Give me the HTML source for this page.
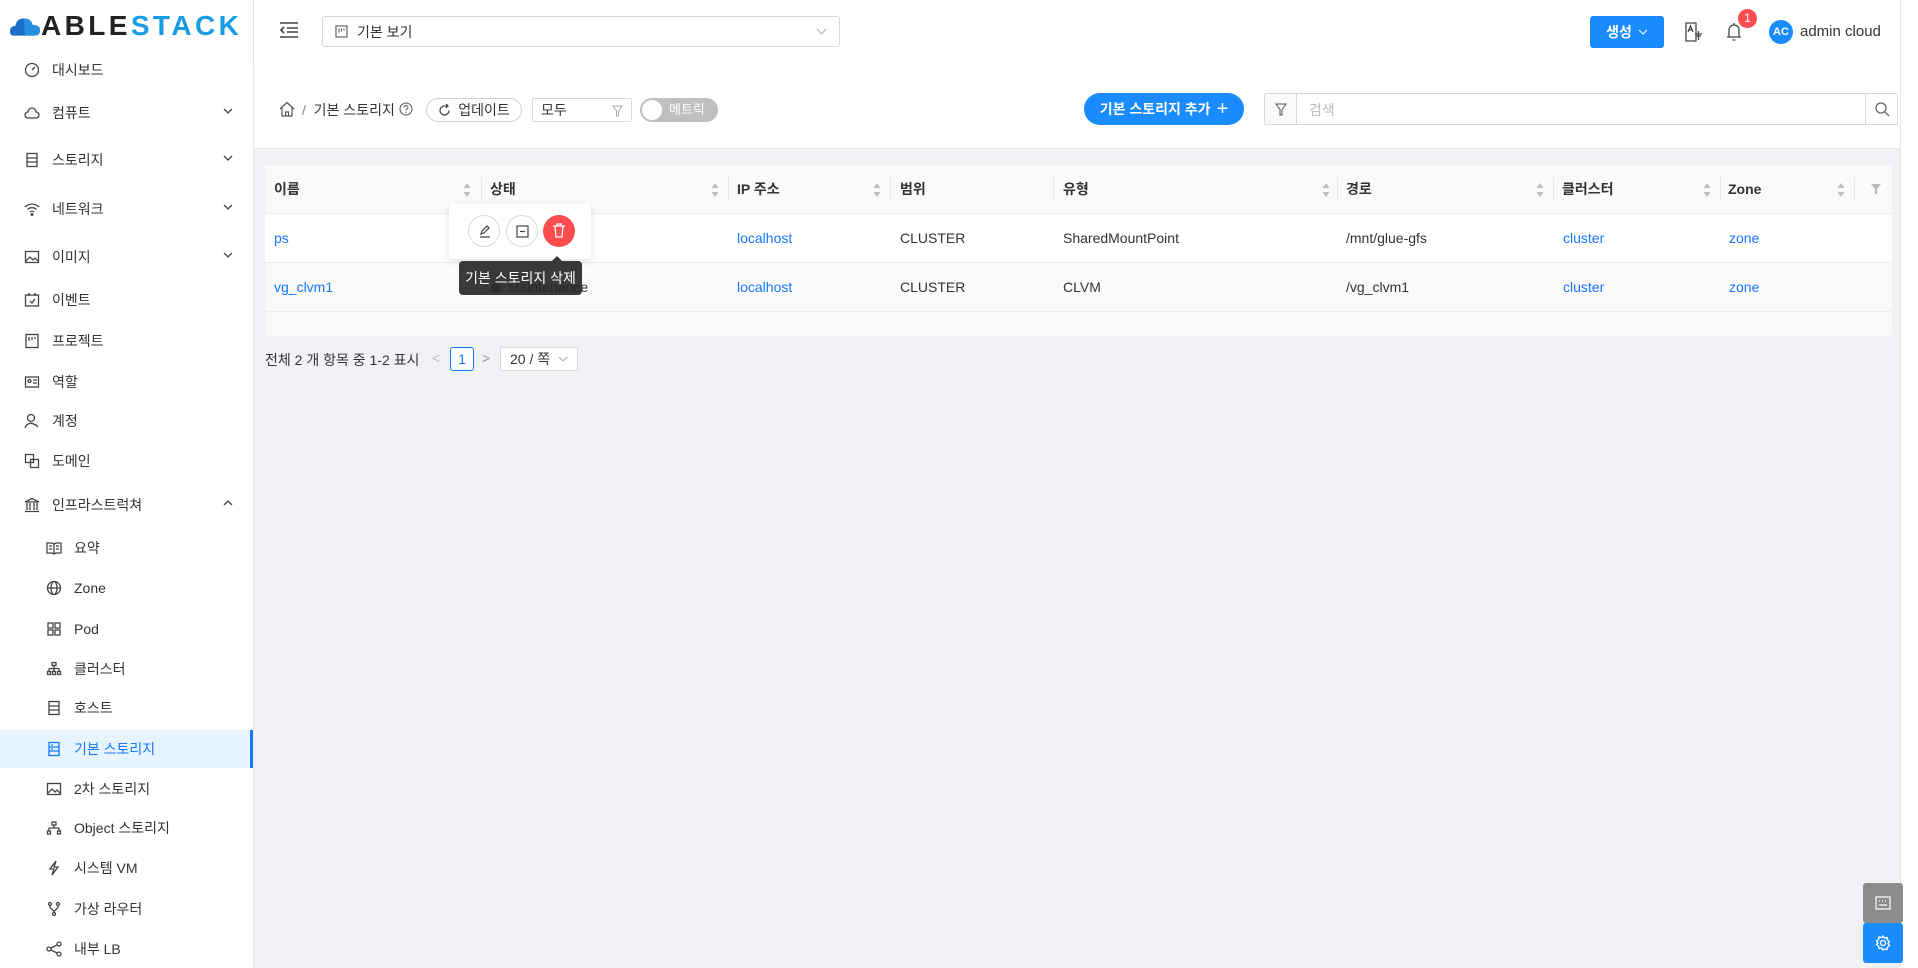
<!DOCTYPE html>
<html><head><meta charset="utf-8">
<style>
*{box-sizing:border-box;margin:0;padding:0}
body{width:1918px;height:968px;overflow:hidden;font-family:"Liberation Sans","Noto Sans CJK KR",sans-serif;font-size:14px;color:#333;background:#f0f2f5;position:relative}
.abs{position:absolute}
.side{left:0;top:0;width:254px;height:968px;background:#fff;border-right:1px solid #e8e8e8}
.item{position:absolute;left:0;width:253px;height:38px;display:flex;align-items:center;padding-left:24px;font-size:14px;color:#333}
.item.sub{padding-left:46px}
.item svg{width:16px;height:16px;margin-right:12px;fill:none;stroke:#444;stroke-width:1.3}
.item .arr{position:absolute;right:20px;top:12px;width:10px;height:10px;margin:0}
.item.act{background:#e6f4ff;color:#1677ff;border-right:3px solid #1677ff}
.item.act svg{stroke:#1677ff}
.hdr{left:254px;top:0;width:1646px;height:64px;background:#fff;box-shadow:0 1px 4px rgba(0,0,0,.06)}
.tb{left:254px;top:64px;width:1646px;height:85px;background:#fff;border-bottom:1px solid #e5e5e5}
.blue{color:#1677ff}
.th{position:absolute;top:0;height:49px;line-height:49px;font-weight:bold;color:#333;font-size:14px}
.sort{position:absolute;top:18px;width:8px;height:14px}
.cell{position:absolute;font-size:14px}
</style></head><body>

<!-- sidebar -->
<div class="abs side">
  <div class="abs" style="left:10px;top:10px;display:flex;align-items:center">
    <svg width="30" height="24" viewBox="0 0 28 22"><path d="M3 20 Q0 20 0 16 Q0 11 5 11 Q6 4 13 4 Q20 4 21 10 Q28 10 28 15 Q28 20 23 20Z" fill="#1a6fc4"/><path d="M13 4 Q20 4 21 10 Q28 10 28 15 Q28 20 23 20 L14 20Z" fill="#2b8fe0"/></svg>
    <span style="font-size:28px;font-weight:bold;letter-spacing:3.4px;color:#222;margin-left:1px;font-family:'Liberation Sans',sans-serif">ABLE<span style="color:#1a9be6">STACK</span></span>
  </div>
  <div class="item" style="top:51px"><svg viewBox="0 0 16 16"><circle cx="8" cy="8" r="6.5"/><path d="M8 8l3-3"/></svg>대시보드</div>
  <div class="item" style="top:94px"><svg viewBox="0 0 16 16"><path d="M4 13h8a3 3 0 000-6 4 4 0 00-8 0 3 3 0 000 6z"/></svg>컴퓨트<svg class="arr" viewBox="0 0 10 10"><path d="M1 3l4 4 4-4"/></svg></div>
  <div class="item" style="top:141px"><svg viewBox="0 0 16 16"><rect x="3" y="1.5" width="10" height="13"/><path d="M3 6h10M3 10h10"/></svg>스토리지<svg class="arr" viewBox="0 0 10 10"><path d="M1 3l4 4 4-4"/></svg></div>
  <div class="item" style="top:190px"><svg viewBox="0 0 16 16"><path d="M1 6a10 10 0 0114 0M3.5 8.5a6.5 6.5 0 019 0M6 11a3 3 0 014 0"/><circle cx="8" cy="13.5" r=".8"/></svg>네트워크<svg class="arr" viewBox="0 0 10 10"><path d="M1 3l4 4 4-4"/></svg></div>
  <div class="item" style="top:238px"><svg viewBox="0 0 16 16"><rect x="1.5" y="2.5" width="13" height="11"/><path d="M2 12l4-4 3 3 2-2 3 3"/></svg>이미지<svg class="arr" viewBox="0 0 10 10"><path d="M1 3l4 4 4-4"/></svg></div>
  <div class="item" style="top:281px"><svg viewBox="0 0 16 16"><rect x="1.5" y="3" width="13" height="11"/><path d="M5 1v3M11 1v3M6 9l2 2 3-4"/></svg>이벤트</div>
  <div class="item" style="top:322px"><svg viewBox="0 0 16 16"><rect x="2" y="1.5" width="12" height="13"/><path d="M5 4v4M8 4v3M11 4v2"/></svg>프로젝트</div>
  <div class="item" style="top:363px"><svg viewBox="0 0 16 16"><rect x="1.5" y="3" width="13" height="10"/><circle cx="5.5" cy="7" r="1.5"/><path d="M9 6h4M9 9h4"/></svg>역할</div>
  <div class="item" style="top:402px"><svg viewBox="0 0 16 16"><circle cx="7" cy="5" r="3.5"/><path d="M1 15a6 6 0 0110-3M11 11l3 3"/></svg>계정</div>
  <div class="item" style="top:442px"><svg viewBox="0 0 16 16"><rect x="1.5" y="1.5" width="8" height="8"/><rect x="6.5" y="6.5" width="8" height="8"/></svg>도메인</div>
  <div class="item" style="top:486px"><svg viewBox="0 0 16 16"><path d="M1 5l7-3.5 7 3.5zM3 6v7M6 6v7M10 6v7M13 6v7M1 14.5h14"/></svg>인프라스트럭쳐<svg class="arr" viewBox="0 0 10 10"><path d="M1 7l4-4 4 4"/></svg></div>
  <div class="item sub" style="top:529px"><svg viewBox="0 0 16 16"><path d="M1 3h5l2 1 2-1h5v10h-5l-2 1-2-1H1zM8 4v10M3 6h3M3 9h3M10 6h3M10 9h3"/></svg>요약</div>
  <div class="item sub" style="top:569px"><svg viewBox="0 0 16 16"><circle cx="8" cy="8" r="6.5"/><ellipse cx="8" cy="8" rx="3" ry="6.5"/><path d="M1.5 8h13"/></svg>Zone</div>
  <div class="item sub" style="top:610px"><svg viewBox="0 0 16 16"><rect x="2" y="2" width="5" height="5"/><rect x="9" y="2" width="5" height="5"/><rect x="2" y="9" width="5" height="5"/><rect x="9" y="9" width="5" height="5"/></svg>Pod</div>
  <div class="item sub" style="top:650px"><svg viewBox="0 0 16 16"><rect x="6" y="1.5" width="4" height="3"/><path d="M8 4.5v3M3 7.5h10M3 7.5v3M8 7.5v3M13 7.5v3"/><rect x="1.5" y="10.5" width="3" height="3"/><rect x="6.5" y="10.5" width="3" height="3"/><rect x="11.5" y="10.5" width="3" height="3"/></svg>클러스터</div>
  <div class="item sub" style="top:689px"><svg viewBox="0 0 16 16"><rect x="3" y="1.5" width="10" height="13"/><path d="M3 6h10M3 10h10"/></svg>호스트</div>
  <div class="item sub act" style="top:730px"><svg viewBox="0 0 16 16"><rect x="3" y="1.5" width="10" height="13"/><path d="M3 6h10M3 10h10M5 4h2M5 8h2"/></svg>기본 스토리지</div>
  <div class="item sub" style="top:770px"><svg viewBox="0 0 16 16"><rect x="1.5" y="2.5" width="13" height="11"/><path d="M2 12l4-4 3 3 2-2 3 3"/></svg>2차 스토리지</div>
  <div class="item sub" style="top:809px"><svg viewBox="0 0 16 16"><rect x="6" y="2" width="4" height="3"/><path d="M8 5v3M3 8h10M3 8v3M13 8v3"/><rect x="1.5" y="11" width="3" height="3"/><rect x="11.5" y="11" width="3" height="3"/></svg>Object 스토리지</div>
  <div class="item sub" style="top:849px"><svg viewBox="0 0 16 16"><path d="M10 1L4 9h4l-2 6 6-8H8z"/></svg>시스템 VM</div>
  <div class="item sub" style="top:890px"><svg viewBox="0 0 16 16"><circle cx="4" cy="3" r="1.5"/><circle cx="12" cy="3" r="1.5"/><circle cx="8" cy="13" r="1.5"/><path d="M4 4.5v2l4 4M12 4.5v2l-4 4"/></svg>가상 라우터</div>
  <div class="item sub" style="top:930px"><svg viewBox="0 0 16 16"><circle cx="3" cy="8" r="2"/><circle cx="13" cy="3" r="2"/><circle cx="13" cy="13" r="2"/><path d="M5 7l6-3M5 9l6 3"/></svg>내부 LB</div>
</div>

<!-- header -->
<div class="abs hdr">
  <svg class="abs" style="left:25px;top:21px" width="20" height="18" viewBox="0 0 20 18" fill="none" stroke="#444" stroke-width="1.6"><path d="M1 2h18M8 7h11M8 11h11M1 16h18M5 6l-3 3 3 3"/></svg>
  <div class="abs" style="left:68px;top:16px;width:518px;height:31px;border:1px solid #d9d9d9;border-radius:3px;display:flex;align-items:center;padding-left:12px;font-size:14px">
    <svg width="13" height="13" viewBox="0 0 13 13" fill="none" stroke="#555" stroke-width="1.1" style="margin-right:9px"><rect x="1" y="1" width="11" height="11"/><path d="M4 3.5v4M6.5 3.5v3M9 3.5v2"/></svg>기본 보기
    <svg class="abs" style="right:12px;top:11px" width="11" height="8" viewBox="0 0 11 8" fill="none" stroke="#aaa"><path d="M1 1l4.5 5L10 1"/></svg>
  </div>
  <div class="abs" style="left:1336px;top:16px;width:74px;height:32px;background:#1a8cff;border-radius:3px;color:#fff;font-size:14px;display:flex;align-items:center;justify-content:center;font-weight:bold">생성 <svg width="10" height="7" viewBox="0 0 10 7" fill="none" stroke="#fff" style="margin-left:6px"><path d="M1 1l4 4 4-4"/></svg></div>
  <svg class="abs" style="left:1430px;top:22px" width="20" height="20" viewBox="0 0 20 20" fill="none" stroke="#444" stroke-width="1.3"><path d="M2 1h10v18H2z"/><path d="M4 10l2.5-6L9 10M5 8h3M11 12h7M14.5 9v9M12 14h5"/></svg>
  <svg class="abs" style="left:1472px;top:21px" width="16" height="22" viewBox="0 0 16 22" fill="none" stroke="#444" stroke-width="1.3"><path d="M3 16V9a5 5 0 0110 0v7h2H1zM6.5 19h3M8 2v2"/></svg>
  <div class="abs" style="left:1484px;top:9px;width:19px;height:19px;background:#ff4d4f;border-radius:50%;color:#fff;font-size:12px;text-align:center;line-height:19px">1</div>
  <div class="abs" style="left:1515px;top:20px;width:24px;height:24px;background:#1a8cff;border-radius:50%;color:#fff;font-size:11px;text-align:center;line-height:24px;font-weight:bold">AC</div>
  <div class="abs" style="left:1546px;top:23px;font-size:15px;color:#333">admin cloud</div>
</div>
<div class="abs" style="left:1900px;top:0;width:18px;height:968px;background:#fff;border-left:1px solid #e6e6e6"></div>

<!-- toolbar -->
<div class="abs tb">
  <svg class="abs" style="left:25px;top:37px" width="16" height="16" viewBox="0 0 16 16" fill="none" stroke="#555" stroke-width="1.2"><path d="M1 8l7-6.5L15 8M3 6.5V15h10V6.5M6.5 15v-4h3v4"/></svg>
  <div class="abs" style="left:48px;top:36px;font-size:14px;color:#333"><span style="color:#888">/</span>&nbsp; 기본 스토리지</div>
  <svg class="abs" style="left:145px;top:38px" width="14" height="14" viewBox="0 0 14 14" fill="none" stroke="#555"><circle cx="7" cy="7" r="6"/><path d="M5 5.5a2 2 0 114 0c0 1.3-2 1.3-2 3M7 10v1"/></svg>
  <div class="abs" style="left:172px;top:34px;width:96px;height:24px;border:1px solid #d0d0d0;border-radius:12px;display:flex;align-items:center;justify-content:center;font-size:14px"><svg width="13" height="13" viewBox="0 0 13 13" fill="none" stroke="#444" stroke-width="1.3" style="margin-right:7px"><path d="M11 6.5A4.5 4.5 0 116.5 2h3M8 0l2 2-2 2"/></svg>업데이트</div>
  <div class="abs" style="left:278px;top:34px;width:100px;height:24px;border:1px solid #d9d9d9;border-radius:2px;padding-left:8px;line-height:22px;font-size:14px">모두<svg class="abs" style="right:8px;top:6px" width="11" height="12" viewBox="0 0 11 12" fill="none" stroke="#aaa"><path d="M1 1h9L6.5 6v5h-2V6z"/></svg></div>
  <div class="abs" style="left:386px;top:34px;width:78px;height:24px;background:#bfbfbf;border-radius:12px;color:#fff;font-size:13px;line-height:24px;padding-left:29px">메트릭<div class="abs" style="left:2px;top:2px;width:20px;height:20px;background:#fff;border-radius:50%"></div></div>
  <div class="abs" style="left:830px;top:29px;width:160px;height:32px;background:#1a8cff;border-radius:16px;color:#fff;font-size:14px;font-weight:bold;display:flex;align-items:center;justify-content:center">기본 스토리지 추가 <span style="font-size:20px;font-weight:normal;margin-left:6px;line-height:1">+</span></div>
  <div class="abs" style="left:1010px;top:29px;width:634px;height:32px;border:1px solid #d9d9d9;border-radius:2px;background:#fff">
    <div class="abs" style="left:0;top:0;width:32px;height:30px;background:#fafafa;border-right:1px solid #d9d9d9"><svg class="abs" style="left:10px;top:9px" width="12" height="13" viewBox="0 0 12 13" fill="none" stroke="#555"><path d="M1 1h10L7 6.5V12H5V6.5z"/></svg></div>
    <div class="abs" style="left:44px;top:6px;color:#bbb;font-size:14px">검색</div>
    <div class="abs" style="right:0;top:0;width:32px;height:30px;border-left:1px solid #d9d9d9"><svg class="abs" style="left:9px;top:8px" width="15" height="15" viewBox="0 0 15 15" fill="none" stroke="#666" stroke-width="1.3"><circle cx="6" cy="6" r="5"/><path d="M10 10l4 4"/></svg></div>
  </div>
</div>

<!-- table -->
<div class="abs" style="left:265px;top:165px;width:1627px;height:171px;background:#fafafa;border-radius:4px">
  <div class="abs" style="left:0;top:0;width:1627px;height:49px;background:#fafafa;border-bottom:1px solid #eee"></div>
  <div class="abs" style="left:0;top:49px;width:1627px;height:49px;background:#fff;border-bottom:1px solid #eee"></div>
  <div class="abs" style="left:0;top:98px;width:1627px;height:49px;background:#fafafa;border-bottom:1px solid #eee"></div>
</div>
<div class="abs" style="left:265px;top:165px;width:1627px;height:49px">
  <div class="th" style="left:9px">이름</div>
  <div class="th" style="left:225px">상태</div>
  <div class="th" style="left:472px">IP 주소</div>
  <div class="th" style="left:635px">범위</div>
  <div class="th" style="left:798px">유형</div>
  <div class="th" style="left:1081px">경로</div>
  <div class="th" style="left:1297px">클러스터</div>
  <div class="th" style="left:1463px">Zone</div>
  <svg class="abs" style="left:1606px;top:19px" width="10" height="10" viewBox="0 0 10 10" fill="#bbb"><path d="M0 0h10L6 5v5H4V5z"/></svg>
</div>
<svg width="0" height="0" style="position:absolute"><defs><g id="srt"><path d="M4 0l3.5 5h-7z" fill="#bfbfbf"/><path d="M4 14l3.5-5h-7z" fill="#bfbfbf"/></g></defs></svg>
<svg class="sort" style="left:463px;top:183px" viewBox="0 0 8 14"><use href="#srt"/></svg>
<svg class="sort" style="left:711px;top:183px" viewBox="0 0 8 14"><use href="#srt"/></svg>
<svg class="sort" style="left:873px;top:183px" viewBox="0 0 8 14"><use href="#srt"/></svg>
<svg class="sort" style="left:1322px;top:183px" viewBox="0 0 8 14"><use href="#srt"/></svg>
<svg class="sort" style="left:1536px;top:183px" viewBox="0 0 8 14"><use href="#srt"/></svg>
<svg class="sort" style="left:1703px;top:183px" viewBox="0 0 8 14"><use href="#srt"/></svg>
<svg class="sort" style="left:1837px;top:183px" viewBox="0 0 8 14"><use href="#srt"/></svg>
<div class="abs" style="left:481px;top:177px;width:1px;height:24px;background:#e8e8e8"></div>
<div class="abs" style="left:728px;top:177px;width:1px;height:24px;background:#e8e8e8"></div>
<div class="abs" style="left:890px;top:177px;width:1px;height:24px;background:#e8e8e8"></div>
<div class="abs" style="left:1053px;top:177px;width:1px;height:24px;background:#e8e8e8"></div>
<div class="abs" style="left:1337px;top:177px;width:1px;height:24px;background:#e8e8e8"></div>
<div class="abs" style="left:1553px;top:177px;width:1px;height:24px;background:#e8e8e8"></div>
<div class="abs" style="left:1720px;top:177px;width:1px;height:24px;background:#e8e8e8"></div>
<div class="abs" style="left:1854px;top:177px;width:1px;height:24px;background:#e8e8e8"></div>

<div class="cell blue" style="left:274px;top:230px">ps</div>
<div class="cell blue" style="left:737px;top:230px">localhost</div>
<div class="cell" style="left:900px;top:230px">CLUSTER</div>
<div class="cell" style="left:1063px;top:230px">SharedMountPoint</div>
<div class="cell" style="left:1346px;top:230px">/mnt/glue-gfs</div>
<div class="cell blue" style="left:1563px;top:230px">cluster</div>
<div class="cell blue" style="left:1729px;top:230px">zone</div>

<div class="cell blue" style="left:274px;top:279px">vg_clvm1</div>
<div class="abs" style="left:491px;top:283px;width:10px;height:10px;border-radius:50%;background:#7a4a10"></div>
<div class="cell" style="left:508px;top:279px">Maintenance</div>
<div class="cell blue" style="left:737px;top:279px">localhost</div>
<div class="cell" style="left:900px;top:279px">CLUSTER</div>
<div class="cell" style="left:1063px;top:279px">CLVM</div>
<div class="cell" style="left:1346px;top:279px">/vg_clvm1</div>
<div class="cell blue" style="left:1563px;top:279px">cluster</div>
<div class="cell blue" style="left:1729px;top:279px">zone</div>

<!-- popover -->
<div class="abs" style="left:449px;top:204px;width:142px;height:55px;background:#fff;border-radius:4px;box-shadow:0 2px 8px rgba(0,0,0,.12)">
  <div class="abs" style="left:19px;top:11px;width:32px;height:32px;border:1px solid #d9d9d9;border-radius:50%"><svg class="abs" style="left:9px;top:8px" width="14" height="14" viewBox="0 0 14 14" fill="none" stroke="#444" stroke-width="1.2"><path d="M3 10l1-3 5-5 2 2-5 5zM2 13h10"/></svg></div>
  <div class="abs" style="left:57px;top:11px;width:32px;height:32px;border:1px solid #d9d9d9;border-radius:50%"><svg class="abs" style="left:9px;top:9px" width="13" height="13" viewBox="0 0 13 13" fill="none" stroke="#444" stroke-width="1.2"><rect x="1" y="1" width="11" height="11"/><path d="M4 6.5h5"/></svg></div>
  <div class="abs" style="left:94px;top:11px;width:32px;height:32px;background:#ff4d4f;border-radius:50%"><svg class="abs" style="left:9px;top:8px" width="14" height="15" viewBox="0 0 14 15" fill="none" stroke="#fff" stroke-width="1.3"><path d="M1 3h12M5 3V1h4v2M3 3l1 11h6l1-11"/></svg></div>
</div>
<div class="abs" style="left:459px;top:261px;width:123px;height:34px;background:rgba(40,40,40,.92);border-radius:4px;color:#fff;font-size:14px;line-height:34px;text-align:center">기본 스토리지 삭제</div>
<div class="abs" style="left:552px;top:256px;width:0;height:0;border-left:5px solid transparent;border-right:5px solid transparent;border-bottom:5px solid rgba(40,40,40,.92)"></div>

<!-- pagination -->
<div class="abs" style="left:265px;top:350px;font-size:14px;color:#333">전체 2 개 항목 중 1-2 표시</div>
<div class="abs" style="left:432px;top:350px;color:#bbb;font-size:14px">&lt;</div>
<div class="abs" style="left:450px;top:347px;width:24px;height:24px;border:1px solid #1677ff;border-radius:3px;color:#1677ff;text-align:center;line-height:22px;background:#fff">1</div>
<div class="abs" style="left:482px;top:350px;color:#999;font-size:14px">&gt;</div>
<div class="abs" style="left:500px;top:347px;width:78px;height:24px;border:1px solid #d9d9d9;border-radius:2px;background:#fff;padding-left:9px;line-height:22px;font-size:14px">20 / 쪽<svg class="abs" style="right:9px;top:8px" width="10" height="7" viewBox="0 0 10 7" fill="none" stroke="#aaa"><path d="M1 1l4 4 4-4"/></svg></div>

<!-- float buttons -->
<div class="abs" style="left:1863px;top:883px;width:40px;height:40px;background:#8c8c8c;border-radius:3px"><svg class="abs" style="left:12px;top:13px" width="16" height="14" viewBox="0 0 16 14" fill="none" stroke="#fff" stroke-width="1.2"><rect x="1" y="1" width="14" height="12"/><path d="M4 9h8M4 5h1M7 5h1M10 5h1"/></svg></div>
<div class="abs" style="left:1863px;top:923px;width:40px;height:40px;background:#1a8cff;border-radius:3px"><svg class="abs" style="left:12px;top:12px" width="16" height="16" viewBox="0 0 16 16" fill="none" stroke="#fff" stroke-width="1.3"><circle cx="8" cy="8" r="2.5"/><path d="M8 1l1.5 2 2.5-.5.5 2.5 2 1.5-1.5 2 1.5 2-2 1.5-.5 2.5-2.5-.5L8 15l-1.5-2-2.5.5-.5-2.5-2-1.5L3 8 1.5 6l2-1.5.5-2.5 2.5.5z"/></svg></div>
</body></html>
